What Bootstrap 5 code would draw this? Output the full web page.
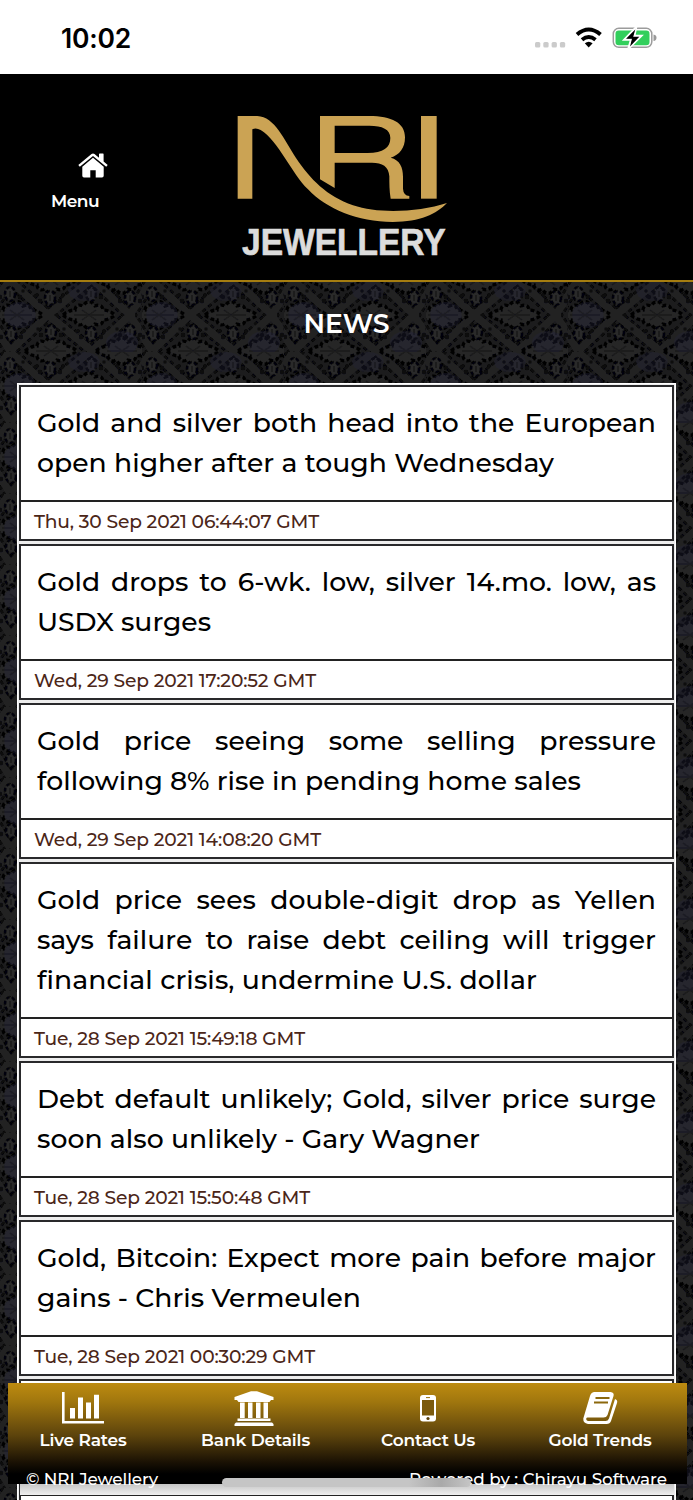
<!DOCTYPE html>
<html lang="en">
<head>
<meta charset="utf-8">
<meta name="viewport" content="width=device-width, initial-scale=1">
<title>NRI Jewellery - News</title>
<link href="https://cdn.jsdelivr.net/npm/bootstrap@5.3.0/dist/css/bootstrap.min.css" rel="stylesheet">
<style>
html,body{height:1500px;overflow:hidden}
body{font-family:Montserrat,Inter,sans-serif;background:#1c1c1e;color:#000}
.screen{height:1500px;overflow:hidden}
.damask{left:0;top:281px;z-index:0}
.status{height:74px;background:#fff;padding:0 36px 0 61px}
.clock{font-family:Inter,sans-serif;font-size:26.5px;font-weight:600;line-height:74px;padding-top:2px}
.masthead{height:208px;background:#000;border-bottom:2px solid #a57d10}
.home-link{width:150px;padding-top:78px;color:#fff;font-weight:600;font-size:17px;line-height:24px}
.home-link svg{margin-left:35px}
.home-link .fit{margin:12px 0 0 51px}
.logo{left:220px;top:26px}
.page-title{height:101px;padding-top:22px;color:#fff;font-weight:600;font-size:26.67px;line-height:40px}
.news{margin:0 17px;background:#ededed;border:1px solid #fff;padding:1px 1px;gap:3px}
.news-item{background:#fff;border:2px solid #29292b;flex:none}
.headline{padding:16px 16px 17px 16px;border-bottom:2px solid #222;font-size:26.67px;line-height:40px;font-weight:500}
.headline>span{display:block;height:40px;white-space:nowrap}
.full{text-align:justify;text-align-last:justify}
.stamp{height:37px;line-height:39px;padding-left:13px;font-size:18.67px;font-weight:500;color:#4b2618}
.fit{display:inline-block!important;white-space:nowrap;width:max-content}
.tabs{left:8px;top:1383px;width:679px;height:101px;z-index:3;background:linear-gradient(#bd8b10 0,#a1770e 18%,#5c430c 52%,#1b1204 78%,#000 90%);color:#fff}
.tabs nav{margin-left:-11px}
.tab-link{width:172px;font-size:17px;font-weight:600;line-height:24px;height:70px;padding-top:7px}
.tab-link.wide{width:173px}
.tab-link svg{height:38px}
.credits{font-size:16.8px;font-weight:500;line-height:22px;height:30px;padding:15px 20px 0 18px}
.shade{left:20px;top:1484px;width:654px;height:11px;background:linear-gradient(#c6c6c6,#efefef);z-index:2}
.home-bar{left:222px;top:1478px;width:249px;height:9px;background:linear-gradient(90deg,#c5c5c5 75%,#a9a9a9 88%,#c5c5c5);border-radius:5px;z-index:4}
</style>
</head>
<body>
<div class="screen position-relative">
<svg class="damask position-absolute" width="693" height="1219" aria-hidden="true">
<defs>
<filter id="soft"><feGaussianBlur stdDeviation=".7"/></filter>
<g id="flower">
<path d="M-26 0Q-20-5-14-5Q-13-12-6-9Q0-18 6-9Q13-12 14-5Q20-5 26 0Q20 5 14 5Q13 12 6 9Q0 18-6 9Q-13 12-14 5Q-20 5-26 0Z" fill="#262627" stroke="#050506" stroke-width="3.4" stroke-dasharray="4 2.500"/>
<path d="M-15 0h30M-7-5l14 10M-7 5l14-10" stroke="#1a1a1b" stroke-width="1.4"/>
</g>
<g id="bud"><ellipse rx="5" ry="7" fill="#29292b" stroke="#060607" stroke-width="2.600" stroke-dasharray="4 2"/><path d="M0-3v6" stroke="#18181a" stroke-width="1.500"/><circle cx="-10" cy="3" r="2.200" fill="#080809"/><circle cx="10" cy="3" r="2.200" fill="#080809"/><circle cx="-13" cy="-3" r="1.800" fill="#0a0a0b"/><circle cx="13" cy="-3" r="1.800" fill="#0a0a0b"/></g>
<pattern id="brocade" width="142" height="71" patternUnits="userSpaceOnUse">
<rect width="142" height="71" fill="#1c1c1d"/>
<g filter="url(#soft)">
<g fill="none" stroke="#070708" stroke-width="13" stroke-dasharray="4 3.500"><path d="M8-2L48 34L10 70M48 34L92 70L130 34L92-2L48 34M130 34L152 70M130 34L152-2M10 70L-12 34L10-2"/></g>
<g fill="none" stroke="#232324" stroke-width="7.500"><path d="M8-2L48 34L10 70M48 34L92 70L130 34L92-2L48 34M130 34L152 70M130 34L152-2M10 70L-12 34L10-2"/></g>
<use href="#flower" x="89" y="34"/><use href="#flower" x="17" y="34"/>
<use href="#flower" x="51" y="70"/><use href="#flower" x="51" y="-1"/><use href="#flower" x="122" y="70"/><use href="#flower" x="122" y="-1"/>
<use href="#bud" x="10" y="13"/><use href="#bud" x="91" y="13"/><use href="#bud" x="50" y="17"/><use href="#bud" x="130" y="17"/>
<use href="#bud" x="11" y="53"/><use href="#bud" x="91" y="53"/><use href="#bud" x="51" y="51"/><use href="#bud" x="130" y="51"/>
<ellipse cx="20" cy="34" rx="16" ry="13" fill="#25253c" opacity=".3"/><ellipse cx="122" cy="62" rx="16" ry="12" fill="#25253c" opacity=".3"/><ellipse cx="84" cy="10" rx="16" ry="10" fill="#25253c" opacity=".25"/>
</g>
</pattern></defs>
<rect width="693" height="1219" fill="url(#brocade)"/>
</svg>

<header class="position-relative">
<div class="status d-flex justify-content-between align-items-center">
<span class="clock fit" data-w="70">10:02</span>
<svg width="123" height="26" viewBox="534 24 123 26">
<g fill="#cbcbcb"><rect x="535" y="42" width="5.3" height="5.6" rx="1.5"/><rect x="543.3" y="42" width="5.3" height="5.6" rx="1.5"/><rect x="551.6" y="42" width="5.3" height="5.6" rx="1.5"/><rect x="559.9" y="42" width="5.3" height="5.6" rx="1.5"/></g>
<g fill="none" stroke="#000" stroke-width="4"><path d="M577 34.5Q588.7 24.5 600.5 34.5"/><path d="M582 39.8Q588.7 34.2 595.5 39.8" stroke-width="3.8"/></g><path d="M584.8 43.2q3.9-3 7.8 0l-3.9 4.2Z"/>
<rect x="613.3" y="28.3" width="38.5" height="19" rx="5.5" fill="#fff" stroke="#9c9c9c" stroke-width="1.5"/><rect x="615.5" y="30.5" width="34" height="14.7" rx="3.3" fill="#32cf5c"/><path d="M653.5 34.5q3 .5 3 3.3t-3 3.3Z" fill="#999"/>
<path d="M636 27.5L624.6 39.5H631.2L628.5 48.5L641 36H634.2Z" stroke="#fff" stroke-width="2.4"/><path d="M635.3 29.5L626 38.8H632L630 46.5L639.3 36.8H633.2Z"/>
</svg>
</div>
<div class="masthead position-relative">
<div class="home-link">
<svg class="d-block" width="30" height="25" viewBox="0 0 30 25" transform="translate(43 1)" fill="#fff"><path d="M15 4.7L25.7 13.7V22.8Q25.7 24.5 24 24.5H17.7V17.2H12.3V24.5H6Q4.3 24.5 4.3 22.8V13.7Z"/><path d="M.3 12L13.5 1Q15 0 16.5 1L21 4.8V1.2Q21 .5 21.7.5H25Q25.6.5 25.6 1.2V8.5L29.7 12L28.2 13.8L15 2.9L1.8 13.8Z"/></svg>
<span class="fit" data-w="48">Menu</span>
</div>
<svg class="logo position-absolute" width="240" height="170" viewBox="0 0 720 510" role="img" aria-label="NRI Jewellery">
<g fill="#cba354"><path d="M53 48H112C164 50 193 120 228 174C271 238 320 288 399 316C475 342 594 337 681 309C649 342 602 365 518 366C412 365 321 328 264 268C215 221 176 123 122 90Q108 82 97 88V296H53Z"/>
<path d="M300 48H447C515 48 555 68 555 112C555 145 538 165 512 173C540 180 549 202 549 230V266Q550 286 568 288V296H512C508 274 508 249 508 229C506 199 487 188 456 188H344V264L300 238ZM344 77V159H443C490 159 511 143 511 114C511 88 487 77 448 77Z"/><rect x="603" y="48" width="47" height="248"/></g>
<text x="66" y="465" textLength="611" lengthAdjust="spacingAndGlyphs" font-family="Liberation Sans" font-weight="700" font-size="108" fill="#dcdcdc" stroke="#dcdcdc" stroke-width="2">JEWELLERY</text>
</svg>
</div>
<h1 class="page-title text-center mb-0"><span class="fit" data-w="86">NEWS</span></h1>
</header>

<main class="news position-relative d-flex flex-column">
<article class="news-item"><div class="headline"><span class="full">Gold and silver both head into the European</span><span class="fit" data-w="517">open higher after a tough Wednesday</span></div><div class="stamp"><span class="fit" data-w="285">Thu, 30 Sep 2021 06:44:07 GMT</span></div></article>
<article class="news-item"><div class="headline"><span class="full">Gold drops to 6-wk. low, silver 14.mo. low, as</span><span class="fit" data-w="174">USDX surges</span></div><div class="stamp"><span class="fit" data-w="282">Wed, 29 Sep 2021 17:20:52 GMT</span></div></article>
<article class="news-item"><div class="headline"><span class="full">Gold price seeing some selling pressure</span><span class="fit" data-w="544">following 8% rise in pending home sales</span></div><div class="stamp"><span class="fit" data-w="287">Wed, 29 Sep 2021 14:08:20 GMT</span></div></article>
<article class="news-item"><div class="headline"><span class="full">Gold price sees double-digit drop as Yellen</span><span class="full">says failure to raise debt ceiling will trigger</span><span class="fit" data-w="500">financial crisis, undermine U.S. dollar</span></div><div class="stamp"><span class="fit" data-w="271">Tue, 28 Sep 2021 15:49:18 GMT</span></div></article>
<article class="news-item"><div class="headline"><span class="full">Debt default unlikely; Gold, silver price surge</span><span class="fit" data-w="443">soon also unlikely - Gary Wagner</span></div><div class="stamp"><span class="fit" data-w="276">Tue, 28 Sep 2021 15:50:48 GMT</span></div></article>
<article class="news-item"><div class="headline"><span class="full">Gold, Bitcoin: Expect more pain before major</span><span class="fit" data-w="324">gains - Chris Vermeulen</span></div><div class="stamp"><span class="fit" data-w="281">Tue, 28 Sep 2021 00:30:29 GMT</span></div></article>
<article class="news-item"><div class="headline"><span></span><span></span></div><div class="stamp"></div></article>
</main>

<div class="shade position-absolute"></div>
<footer class="tabs position-absolute">
<nav class="d-flex">
<div class="tab-link d-flex flex-column align-items-center"><svg width="44" height="38" viewBox="0 0 44 38" fill="#fff"><path d="M1 2H3.6V31H43V33.5H1Z"/><path d="M9 18h5v10.5H9ZM17 7.500h5v21h-5ZM25 12.500h5v16h-5ZM33 4.800h5v23.700h-5Z"/></svg><span class="fit" data-w="87">Live Rates</span></div>
<div class="tab-link wide d-flex flex-column align-items-center"><svg width="44" height="38" viewBox="0 0 44 38" fill="#fff"><path d="M17 1.200H23L39.500 7V10H37L35.500 12H4.500L3 10H.5V7ZM6 12.500h4.700V28H6ZM14 12.500h4.500V28H14ZM22 12.500h4.500V28H22ZM29.500 12.500H34V28H29.500ZM3.500 28.500H36.500V31H3.500ZM2 32.500H38L39.500 34V36H.5V34Z"/></svg><span class="fit" data-w="109">Bank Details</span></div>
<div class="tab-link d-flex flex-column align-items-center"><svg width="18" height="38" viewBox="0 0 18 38"><rect x="1" y="5" width="16" height="26.500" rx="3" fill="#fff"/><path d="M3 10h12v15.500H3Z" fill="#7b5a0d"/><path d="M7 7.600h4" stroke="#96700d"/><circle cx="9" cy="28.500" r="1.600" fill="#5b420b"/></svg><span class="fit" data-w="94">Contact Us</span></div>
<div class="tab-link d-flex flex-column align-items-center"><svg width="36" height="38" viewBox="-.5 0 36 38" fill="#fff"><path d="M11.500 2H28Q32 2.500 31 6L25 25Q24 27.500 21 27.500H5Q3 28 4 30Q4.500 31 6 31H23Q25.500 31 26.500 28.500L32.500 9Q35.500 10 34.500 13L28.500 31Q27.500 34 24 34H5.500Q.5 33 .8 28.500L7.500 6Q8.500 2.500 11.500 2Z"/><path d="M13 8H27M11.500 12.500H25.500" stroke="#8c680d" stroke-width="2"/></svg><span class="fit" data-w="103">Gold Trends</span></div>
</nav>
<div class="credits d-flex justify-content-between text-nowrap"><span class="fit" data-w="132">© NRI Jewellery</span><span class="fit" data-w="258">Powered by : Chirayu Software</span></div>
</footer>
<div class="home-bar position-absolute"></div>
</div>
<script src="https://cdn.jsdelivr.net/npm/bootstrap@5.3.0/dist/js/bootstrap.bundle.min.js"></script>
<script>
// Track each label so it fills its intended measure
document.querySelectorAll('.fit').forEach(function(el){
  el.style.letterSpacing='0px';
  var n=el.textContent.length;
  el.style.letterSpacing=((el.dataset.w-el.getBoundingClientRect().width)/n).toFixed(3)+'px';
});
</script>
</body>
</html>
